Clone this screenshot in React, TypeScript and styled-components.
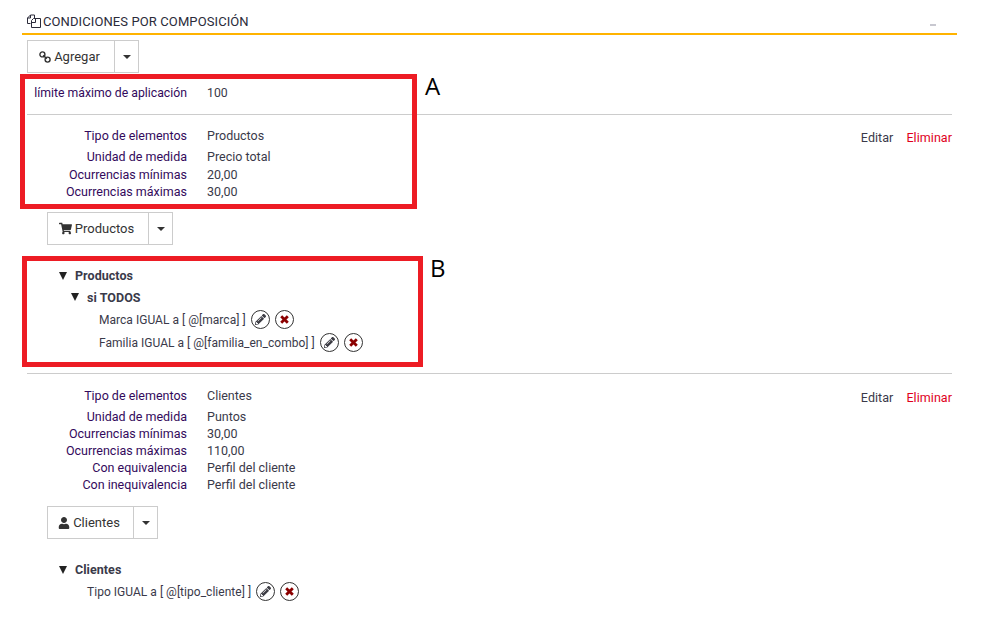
import React from 'react'
import styled, { createGlobalStyle } from 'styled-components'
import { FaShoppingCart, FaUser, FaPencilAlt } from 'react-icons/fa'

const GlobalStyle = createGlobalStyle`
  html, body {
    margin: 0;
    padding: 0;
    background: #fff;
  }
  body {
    font-family: Roboto, "Liberation Sans", Arial, sans-serif;
    font-size: 12.5px;
    color: #3a3a4a;
  }
`

const Page = styled.div`
  position: relative;
  width: 1000px;
  height: 622px;
  overflow: hidden;
  padding: 13px 43px 0 22px;
  box-sizing: border-box;
`

const Header = styled.div`
  display: flex;
  align-items: center;
  justify-content: space-between;
  height: 16px;
  padding: 0 21px 4px 5px;
  border-bottom: 2px solid #ffb300;
`

const Title = styled.div`
  display: flex;
  align-items: center;
  gap: 2px;
  font-size: 13px;
  letter-spacing: 0.1px;
  color: #2b2b3a;
`

const Minimize = styled.span`
  width: 6px;
  height: 2px;
  margin-top: 7px;
  background: #c8c8d0;
`

const Content = styled.div`
  padding: 5px 5px 0;
`

const ButtonGroup = styled.div<{ $indent?: number }>`
  display: inline-flex;
  height: 33px;
  margin-left: ${(p) => p.$indent || 0}px;
  border: 1px solid #ccc;
  box-sizing: border-box;
  vertical-align: top;
`

const MainButton = styled.div<{ $width: number }>`
  display: flex;
  align-items: center;
  justify-content: center;
  gap: 3px;
  width: ${(p) => p.$width}px;
  padding-right: 3px;
  box-sizing: border-box;
  border-right: 1px solid #ccc;
  font-size: 13px;
  color: #333;
`

const CaretButton = styled.div`
  display: flex;
  align-items: center;
  justify-content: center;
  width: 23px;

  &::after {
    content: '';
    border-top: 4px solid #333;
    border-left: 4px solid transparent;
    border-right: 4px solid transparent;
  }
`

const LimitRow = styled.div`
  display: flex;
  align-items: center;
  height: 21px;
  margin-top: 9px;
  font-size: 12.25px;
`

const Rule = styled.hr<{ $top: number }>`
  margin: ${(p) => p.$top}px 0 0;
  border: 0;
  border-top: 1px solid #ccc;
`

const Block = styled.div<{ $top: number }>`
  display: flex;
  justify-content: space-between;
  margin-top: ${(p) => p.$top}px;
`

const Rows = styled.div`
  display: flex;
  flex-direction: column;
`

const Row = styled.div<{ $height: number }>`
  display: flex;
  align-items: center;
  height: ${(p) => p.$height}px;
`

const Label = styled.span`
  width: 160px;
  margin-right: 20px;
  text-align: right;
  color: #330a5c;
  white-space: nowrap;
`

const Value = styled.span`
  color: #3a3a4a;
`

const Actions = styled.div<{ $top: number }>`
  display: flex;
  gap: 13px;
  height: 17px;
  margin-top: ${(p) => p.$top}px;
  align-items: center;
`

const ActionLink = styled.span<{ $danger?: boolean }>`
  letter-spacing: 0.06px;
  color: ${(p) => (p.$danger ? '#e0001b' : '#3a3a4a')};
`

const ButtonSlot = styled.div<{ $top: number }>`
  margin-top: ${(p) => p.$top}px;
  height: 33px;
`

const Tree = styled.div<{ $top: number }>`
  margin-top: ${(p) => p.$top}px;
  display: flex;
  flex-direction: column;
`

const TreeHead = styled.div<{ $indent: number; $height: number }>`
  display: flex;
  align-items: center;
  height: ${(p) => p.$height}px;
  padding-left: ${(p) => p.$indent}px;
  font-weight: 700;
  letter-spacing: 0.05px;
  color: #3a3a4a;
`

const Arrow = styled.span`
  width: 0;
  height: 0;
  margin-right: 8px;
  border-top: 8px solid #222;
  border-left: 4px solid transparent;
  border-right: 4px solid transparent;
`

const Leaf = styled.div<{ $indent: number; $height: number }>`
  display: flex;
  align-items: center;
  gap: 5px;
  height: ${(p) => p.$height}px;
  padding-left: ${(p) => p.$indent}px;
  font-size: 12px;
  letter-spacing: 0.03px;
  color: #3a3a4a;
`

const RoundButton = styled.span`
  display: inline-flex;
  align-items: center;
  justify-content: center;
  width: 19px;
  height: 19px;
  box-sizing: border-box;
  border: 1px solid #333;
  border-radius: 50%;
  font-size: 11px;
  color: #3c3c44;
`

const Marker = styled.div<{ $x: number; $y: number; $w: number; $h: number }>`
  position: absolute;
  left: ${(p) => p.$x}px;
  top: ${(p) => p.$y}px;
  width: ${(p) => p.$w}px;
  height: ${(p) => p.$h}px;
  box-sizing: border-box;
  border: 5px solid #ed1c24;
`

const MarkerLetter = styled.span<{ $x: number; $y: number }>`
  position: absolute;
  left: ${(p) => p.$x}px;
  top: ${(p) => p.$y}px;
  font-family: "Open Sans", sans-serif;
  font-size: 24px;
  line-height: 28px;
  color: #000;
`

const CopyIcon = () => (
  <svg width="14" height="14" viewBox="0 0 14 14" fill="none" stroke="#2b2b3a" strokeWidth="1">
    <path d="M3.5 9.5H.5V4L3.5 1H7.5V4" />
    <path d="M3.5 1V4H.5" />
    <path d="M6.5 4.5H13.5V13.5H4.5V6.5L6.5 4.5" />
    <path d="M8.5 4.5V8.5H4.5" />
  </svg>
)

// two chain rings running from top left to bottom right
const ChainIcon = () => (
  <svg width="12" height="12" viewBox="0 0 12 12" fill="none" stroke="#333" strokeWidth="1.4">
    <circle cx="3.4" cy="3.4" r="2.5" />
    <circle cx="8.6" cy="8.6" r="2.5" />
    <path d="M4.2 4.2L7.8 7.8" />
  </svg>
)

const CrossIcon = () => (
  <svg width="9" height="9" viewBox="0 0 9 9" stroke="#8b0000" strokeWidth="2.8">
    <path d="M1.2 1.2L7.8 7.8M7.8 1.2L1.2 7.8" />
  </svg>
)

type Condition = { label: string; value: string; height: number }

const Conditions = ({ items }: { items: Condition[] }) => (
  <Rows>
    {items.map((c) => (
      <Row key={c.label} $height={c.height}>
        <Label>{c.label}</Label>
        <Value>{c.value}</Value>
      </Row>
    ))}
  </Rows>
)

const RowActions = ({ top }: { top: number }) => (
  <Actions $top={top}>
    <ActionLink>Editar</ActionLink>
    <ActionLink $danger>Eliminar</ActionLink>
  </Actions>
)

const LeafButtons = () => (
  <>
    <RoundButton><FaPencilAlt /></RoundButton>
    <RoundButton><CrossIcon /></RoundButton>
  </>
)

const productos: Condition[] = [
  { label: 'Tipo de elementos', value: 'Productos', height: 23 },
  { label: 'Unidad de medida', value: 'Precio total', height: 19 },
  { label: 'Ocurrencias mínimas', value: '20,00', height: 17 },
  { label: 'Ocurrencias máximas', value: '30,00', height: 17 },
]

const clientes: Condition[] = [
  { label: 'Tipo de elementos', value: 'Clientes', height: 25 },
  { label: 'Unidad de medida', value: 'Puntos', height: 17 },
  { label: 'Ocurrencias mínimas', value: '30,00', height: 17 },
  { label: 'Ocurrencias máximas', value: '110,00', height: 17 },
  { label: 'Con equivalencia', value: 'Perfil del cliente', height: 17 },
  { label: 'Con inequivalencia', value: 'Perfil del cliente', height: 17 },
]

export default function App() {
  return (
    <Page>
      <GlobalStyle />
      <Header>
        <Title><CopyIcon />CONDICIONES POR COMPOSICIÓN</Title>
        <Minimize />
      </Header>
      <Content>
        <ButtonGroup>
          <MainButton $width={87}><ChainIcon />Agregar</MainButton>
          <CaretButton />
        </ButtonGroup>
        <LimitRow>
          <Label>límite máximo de aplicación</Label>
          <Value>100</Value>
        </LimitRow>
        <Rule $top={11} />
        <Block $top={9}>
          <Conditions items={productos} />
          <RowActions top={5} />
        </Block>
        <ButtonSlot $top={12}>
          <ButtonGroup $indent={20}>
            <MainButton $width={101}><FaShoppingCart size={13} />Productos</MainButton>
            <CaretButton />
          </ButtonGroup>
        </ButtonSlot>
        <Tree $top={20}>
          <TreeHead $indent={32} $height={21}><Arrow />Productos</TreeHead>
          <TreeHead $indent={44} $height={22}><Arrow />si TODOS</TreeHead>
          <Leaf $indent={72} $height={23}>Marca IGUAL a [ @[marca] ]<LeafButtons /></Leaf>
          <Leaf $indent={72} $height={23}>Familia IGUAL a [ @[familia_en_combo] ]<LeafButtons /></Leaf>
        </Tree>
        <Rule $top={19} />
        <Block $top={9}>
          <Conditions items={clientes} />
          <RowActions top={6} />
        </Block>
        <ButtonSlot $top={13}>
          <ButtonGroup $indent={20}>
            <MainButton $width={86}><FaUser size={12} />Clientes</MainButton>
            <CaretButton />
          </ButtonGroup>
        </ButtonSlot>
        <Tree $top={20}>
          <TreeHead $indent={32} $height={21}><Arrow />Clientes</TreeHead>
          <Leaf $indent={60} $height={23}>Tipo IGUAL a [ @[tipo_cliente] ]<LeafButtons /></Leaf>
        </Tree>
      </Content>
      <Marker $x={20} $y={74} $w={397} $h={135} />
      <MarkerLetter $x={425} $y={72}>A</MarkerLetter>
      <Marker $x={22} $y={256} $w={401} $h={111} />
      <MarkerLetter $x={430} $y={254}>B</MarkerLetter>
    </Page>
  )
}
